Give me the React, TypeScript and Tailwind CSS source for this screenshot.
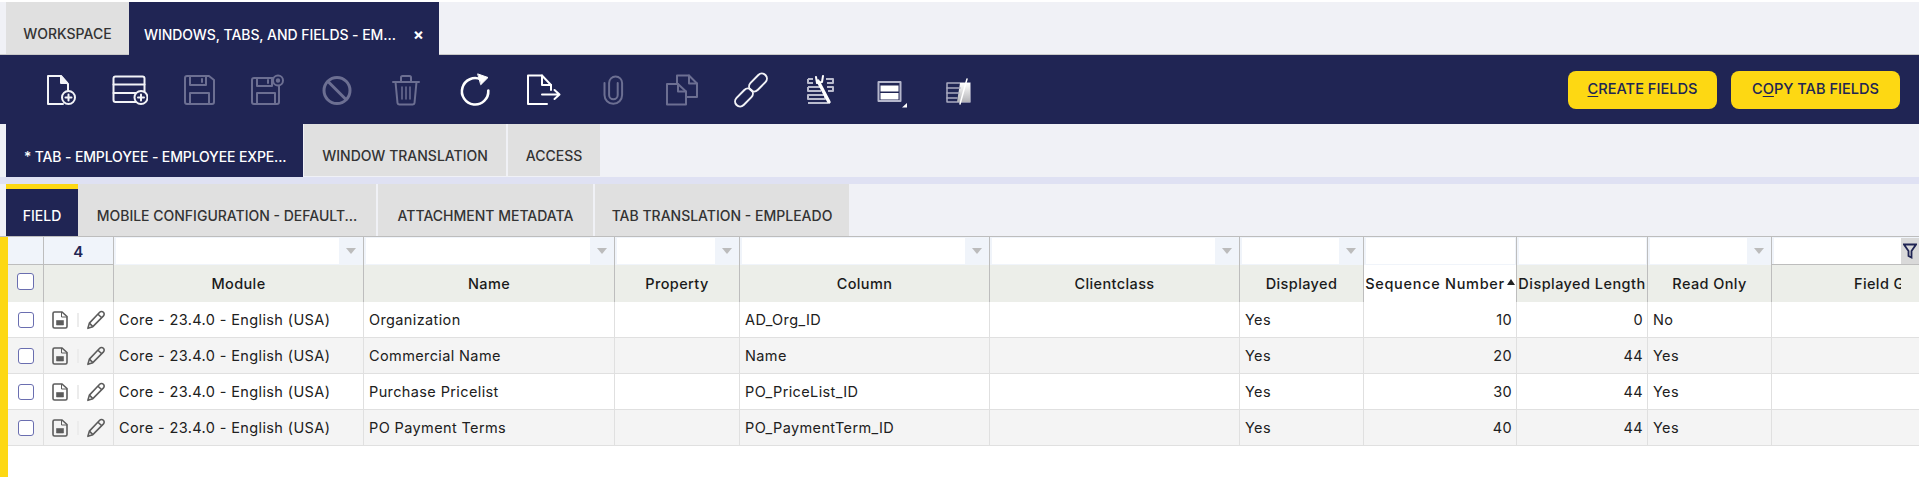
import React from 'react';

const NAVY = '#202554';
const ON = '#f2f3f7';
const OFF = '#6c6f92';
const COLS = 'grid grid-cols-[36px_70px_250px_251px_125px_250px_250px_124px_153px_131px_124px_1fr]';

const Icon: React.FC<{ color: string; sw?: number; children: React.ReactNode }> = ({ color, sw = 2, children }) => (
  <svg width="36" height="36" viewBox="0 0 36 36" fill="none" stroke={color} strokeWidth={sw} strokeLinejoin="round" strokeLinecap="round">
    {children}
  </svg>
);

const toolbarIcons: React.ReactNode[] = [
  <Icon color={ON} key="new">
    <path d="M20 32H5V4h12.5L25 12v6" />
    <path d="M18 4v7h6z" fill={ON} />
    <circle cx="25.5" cy="25.5" r="6.5" />
    <path d="M25.5 22.5v6M22.5 25.5h6" />
  </Icon>,
  <Icon color={ON} key="row">
    <rect x="1.5" y="4.5" width="31" height="25.5" rx="2" />
    <path d="M1.5 12.5h31M1.5 21h31" />
    <circle cx="29" cy="25.5" r="6.5" fill={NAVY} />
    <path d="M29 22.5v6M26 25.5h6" />
  </Icon>,
  <Icon color={OFF} key="save">
    <path d="M6 4h22l5 4v22a2 2 0 0 1-2 2H6a2 2 0 0 1-2-2V6a2 2 0 0 1 2-2z" />
    <path d="M9 4v9h16V4M21 7v3M9 32V21h19v11" />
  </Icon>,
  <Icon color={OFF} key="saveclose">
    <path d="M4 6h19M29 14v16a2 2 0 0 1-2 2H4a2 2 0 0 1-2-2V8a2 2 0 0 1 2-2" />
    <path d="M7 6v8h15V6M18 8v3M7 32V21h18v11" />
    <circle cx="28" cy="8.5" r="5" />
    <circle cx="28" cy="8.5" r="1.2" fill={OFF} />
  </Icon>,
  <Icon color={OFF} sw={3} key="undo">
    <circle cx="18" cy="18.5" r="13" />
    <path d="M9 9.5l18 18" />
  </Icon>,
  <Icon color={OFF} key="delete">
    <path d="M5 10h26M13 10V5.5A1.5 1.5 0 0 1 14.5 4h7A1.5 1.5 0 0 1 23 5.5V10" />
    <path d="M7.5 10l2 21a2 2 0 0 0 2 1.5h13a2 2 0 0 0 2-1.5l2-21" />
    <path d="M14 15v12M18 15v12M22 15v12" strokeWidth="1.5" />
  </Icon>,
  <Icon color="#ffffff" sw={2.6} key="refresh">
    <path d="M24 7.5A13.2 13.2 0 1 0 31.3 18.5" />
    <path d="M21 2l10 3.5-7 7z" fill="#ffffff" strokeWidth="1" />
  </Icon>,
  <Icon color="#ffffff" key="export">
    <path d="M21 32H2V3.5h14L25 13v5" />
    <path d="M16 3.5V13h9" />
    <path d="M16 22.5h17M28.5 18l5 4.5-5 4.5" />
  </Icon>,
  <Icon color={OFF} key="attach">
    <path d="M9.5 11v12a8.8 8.8 0 0 0 17.6 0V11a6.5 6.5 0 0 0-13 0v12a4.3 4.3 0 0 0 8.6 0V11" />
  </Icon>,
  <Icon color={OFF} key="clone">
    <path d="M13 12V3.5h12l8 8V25H23" />
    <path d="M25 3.5v8h8" />
    <path d="M3 12h11l8 7.5v13H3z" />
    <path d="M14 12v7.5h8" />
  </Icon>,
  <Icon color={ON} sw={2} key="link">
    <rect x="14.5" y="5.5" width="21" height="10" rx="5" transform="rotate(-45 25 10.5)" />
    <rect x="0.5" y="20.5" width="21" height="10" rx="5" transform="rotate(-45 11 25.5)" />
  </Icon>,
  <Icon color="#b9bbcd" key="tools">
    <path d="M6 7h5M6 7v4h5M24 7h7v4h-6M6 15h12M25 15h6v4h-5M6 15v4h13M6 23h17v4H6zM6 31h20" strokeLinecap="butt" />
    <path d="M16 9l11 21" stroke="#ffffff" strokeWidth="3.4" />
    <path d="M14 5l1 6 5-1 1-6" stroke="#ffffff" strokeWidth="2" />
  </Icon>,
  <Icon color="#b5b7cc" key="form">
    <rect x="7.5" y="10" width="22" height="19" fill={NAVY} />
    <rect x="9.5" y="13.5" width="18" height="6" fill="#ffffff" stroke="none" />
    <rect x="9.5" y="21" width="18" height="6.5" fill="#ffffff" stroke="none" />
    <path d="M31 35.5l5-4.5v4.5z" fill="#ffffff" stroke="none" />
  </Icon>,
  <Icon color="#a9abc0" sw={1.5} key="audit">
    <defs>
      <linearGradient id="fade" x1="0" y1="0" x2="0" y2="1">
        <stop offset="0" stopColor="#ffffff" />
        <stop offset="1" stopColor="#b4b4b8" />
      </linearGradient>
    </defs>
    <rect x="7" y="11" width="23" height="19" fill={NAVY} />
    <path d="M20 11h10v19H17z" fill="url(#fade)" stroke="none" />
    <path d="M7 16h13M7 21h12M7 26h10" />
    <path d="M27 7l-7 25" stroke="#ffffff" />
  </Icon>,
];

const CaretCell: React.FC = () => (
  <div className="flex h-[28px] border-r border-[#bdbdbd] bg-[#f0f4fa] py-[1px] pl-[2px]">
    <div className="h-[26px] flex-1 bg-white" />
    <div className="flex w-[24px] items-center justify-center">
      <div className="h-0 w-0 border-x-[5px] border-t-[6px] border-x-transparent border-t-[#bcbcbc]" />
    </div>
  </div>
);

const PlainCell: React.FC = () => (
  <div className="h-[28px] border-r border-[#bdbdbd] bg-[#f0f4fa] py-[1px] pl-[2px] pr-[1px]">
    <div className="h-[26px] bg-white" />
  </div>
);

const headers = ['Module', 'Name', 'Property', 'Column', 'Clientclass', 'Displayed'];

const rows = [
  { name: 'Organization', column: 'AD_Org_ID', seq: 10, len: 0, ro: 'No' },
  { name: 'Commercial Name', column: 'Name', seq: 20, len: 44, ro: 'Yes' },
  { name: 'Purchase Pricelist', column: 'PO_PriceList_ID', seq: 30, len: 44, ro: 'Yes' },
  { name: 'PO Payment Terms', column: 'PO_PaymentTerm_ID', seq: 40, len: 44, ro: 'Yes' },
];

const Cell: React.FC<{ children?: React.ReactNode; right?: boolean }> = ({ children, right }) => (
  <div className={`flex items-center whitespace-nowrap border-r border-[#e0e0e0] ${right ? 'justify-end pr-[4px]' : 'pl-[5px]'}`}>
    {children}
  </div>
);

const App: React.FC = () => {
  return (
    <div className="flex h-[477px] flex-col overflow-hidden bg-white font-['Inter',sans-serif] text-[14.5px] tracking-[0.38px] text-[#202020]">
      <div className="h-[2px] bg-white" />
      <div className="flex h-[53px] border-b border-[#c9c9c9] bg-[#f0f1f6] pl-[6px] text-[14px] font-medium tracking-normal">
        <div className="flex w-[123px] items-center justify-center bg-[#e0e0e0] pt-[11px] text-[#333333]">WORKSPACE</div>
        <div className="-mb-[1px] flex w-[310px] items-center bg-[#202554] pl-[15px] pt-[11px] text-white">
          <span className="w-[269px] whitespace-nowrap tracking-[-0.06px]">WINDOWS, TABS, AND FIELDS - EM...</span>
          <span className="text-[16px] font-bold">×</span>
        </div>
      </div>

      <div className="flex h-[69px] items-center justify-between bg-[#202554] pl-[26px] pr-[19px]">
        <div className="flex">
          {toolbarIcons.map((ic, i) => (
            <div key={i} className="flex h-[36px] w-[69px] items-center justify-center">
              {ic}
            </div>
          ))}
        </div>
        <div className="flex gap-[14px] text-[14.6px] font-medium tracking-normal text-[#202554]">
          <button className="h-[38px] w-[149px] rounded-[8px] bg-[#fdd813]">
            <span className="underline underline-offset-2">C</span>REATE FIELDS
          </button>
          <button className="h-[38px] w-[169px] rounded-[8px] bg-[#fdd813]">
            C<span className="underline underline-offset-2">O</span>PY TAB FIELDS
          </button>
        </div>
      </div>

      <div className="flex h-[53px] bg-[#f0f1f6] pl-[6px] text-[14px] font-medium tracking-normal text-[#333333]">
        <div className="flex w-[297px] items-center whitespace-nowrap bg-[#202554] pl-[18px] pt-[11px] tracking-[-0.14px] text-white">* TAB - EMPLOYEE - EMPLOYEE EXPE...</div>
        <div className="ml-[1px] flex h-[52px] w-[202px] items-center justify-center bg-[#e0e0e0] pt-[11px]">WINDOW TRANSLATION</div>
        <div className="ml-[2px] flex h-[52px] w-[92px] items-center justify-center bg-[#e0e0e0] pt-[11px]">ACCESS</div>
      </div>
      <div className="h-[7px] bg-[#dfe1f3]" />

      <div className="flex h-[53px] border-b border-[#bdbdbd] bg-[#f0f1f6] pl-[6px] text-[14px] font-medium tracking-normal text-[#333333]">
        <div className="flex w-[72px] items-center justify-center border-t-[5px] border-[#fdd813] bg-[#202554] pt-[6px] text-white">FIELD</div>
        <div className="flex w-[298px] items-center justify-center whitespace-nowrap bg-[#e0e0e0] pt-[11px]">MOBILE CONFIGURATION - DEFAULT...</div>
        <div className="ml-[2px] flex w-[215px] items-center justify-center bg-[#e0e0e0] pt-[11px]">ATTACHMENT METADATA</div>
        <div className="ml-[2px] flex w-[254px] items-center justify-center bg-[#e0e0e0] pt-[11px]">TAB TRANSLATION - EMPLEADO</div>
      </div>

      <div className="flex flex-1">
        <div className="w-[8px] bg-[#fdd813]" />
        <div className="flex-1 bg-white">
          <div className={`${COLS} h-[28px] border-b border-[#bdbdbd] bg-[#f0f4fa]`}>
            <div className="border-r border-[#bdbdbd]" />
            <div className="flex items-center justify-center border-r border-[#bdbdbd] pt-[2px] text-[15px] font-semibold text-[#202554]">4</div>
            <CaretCell />
            <CaretCell />
            <CaretCell />
            <CaretCell />
            <CaretCell />
            <CaretCell />
            <PlainCell />
            <PlainCell />
            <CaretCell />
            <div className="flex py-[1px] pl-[2px]">
              <div className="h-[26px] flex-1 bg-white" />
              <div className="flex h-[26px] w-[18px] items-center justify-center bg-[#d9d9d9]">
                <svg width="14" height="16" viewBox="0 0 14 16" fill="none" stroke="#202554" strokeWidth="1.8">
                  <path d="M1 1.5h12L8.5 8v6.5L5.5 13V8z" />
                </svg>
              </div>
            </div>
          </div>

          <div className={`${COLS} h-[37px] bg-[#eceee9] font-medium text-[#1a1a1a]`}>
            <div className="flex items-start justify-center border-r border-[#bdbdbd] pt-[8px]">
              <div className="h-[17px] w-[17px] rounded-[3px] border border-[#6a6eb0] bg-white" />
            </div>
            <div className="border-r border-[#bdbdbd]" />
            {headers.map((h) => (
              <div key={h} className="flex items-center justify-center border-r border-[#bdbdbd]">{h}</div>
            ))}
            <div className="flex items-center justify-center whitespace-nowrap border-r border-[#bdbdbd] bg-white tracking-[0.7px]">
              Sequence Number
              <svg className="mb-[4px] ml-[2px]" width="8" height="6" viewBox="0 0 8 6"><path d="M4 0l4 6H0z" fill="#222222" /></svg>
            </div>
            <div className="flex items-center justify-center whitespace-nowrap border-r border-[#bdbdbd] tracking-[0.45px]">Displayed Length</div>
            <div className="flex items-center justify-center border-r border-[#bdbdbd]">Read Only</div>
            <div className="flex items-center">
              <div className="w-[129px] overflow-hidden whitespace-nowrap pl-[82px]">Field Group</div>
            </div>
          </div>

          {rows.map((r, i) => (
            <div key={r.name} className={`${COLS} h-[36px] border-b border-[#e0e0e0] ${i % 2 ? 'bg-[#f4f4f4]' : 'bg-white'}`}>
              <div className="flex items-center justify-center border-r border-[#e0e0e0]">
                <div className="h-[16px] w-[16px] rounded-[3px] border border-[#6a6eb0] bg-white" />
              </div>
              <div className="flex items-center border-r border-[#e0e0e0] pl-[8px]">
                <svg width="16" height="18" viewBox="0 0 16 18" fill="none" stroke="#5c5c5c" strokeWidth="1.6">
                  <path d="M2.5 1h7.5L15 5.5V15.5a1.5 1.5 0 0 1-1.5 1.5h-11A1.5 1.5 0 0 1 1 15.5V2.5A1.5 1.5 0 0 1 2.5 1z" />
                  <path d="M9.5 1v5H15" strokeWidth="1" />
                  <path d="M4.5 9.5h7v4.5h-7z" fill="#5c5c5c" strokeWidth="0.6" />
                </svg>
                <div className="ml-[9px] h-[14px] w-[2px] bg-[#ececec]" />
                <svg className="ml-[7px]" width="20" height="20" viewBox="0 0 19 19" fill="none" stroke="#5c5c5c" strokeWidth="1.5" strokeLinejoin="round">
                  <path d="M13 2.2a2.4 2.4 0 0 1 3.6 3.4L6.5 15.8 1.8 17.4l1.4-4.9z" />
                  <path d="M11.4 4l3.6 3.4M3.2 12.5l3.3 3.3" />
                </svg>
              </div>
              <Cell>Core - 23.4.0 - English (USA)</Cell>
              <Cell>{r.name}</Cell>
              <Cell />
              <Cell>{r.column}</Cell>
              <Cell />
              <Cell>Yes</Cell>
              <Cell right>{r.seq}</Cell>
              <Cell right>{r.len}</Cell>
              <Cell>{r.ro}</Cell>
              <div />
            </div>
          ))}
        </div>
      </div>
    </div>
  );
};

export default App;
